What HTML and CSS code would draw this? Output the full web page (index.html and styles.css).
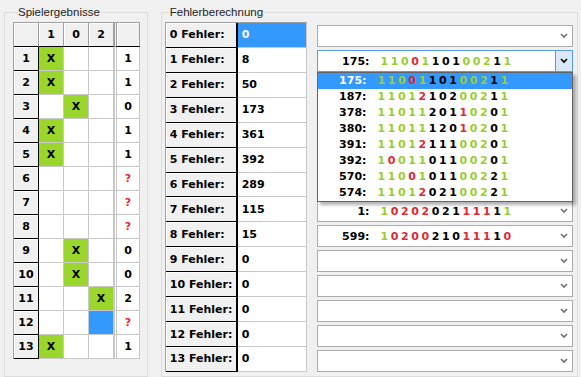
FILE: index.html
```html
<!DOCTYPE html>
<html lang="de">
<head>
    <meta charset="utf-8">
    <title>Fehlerberechnung</title>
    <link rel="stylesheet" href="styles.css">
</head>
<body>
    <div class="window">
        <fieldset class="group players">
            <legend>Spielergebnisse</legend>
            <table class="grid results" id="results">
                <thead>
                    <tr>
                        <th class="corner"></th>
                        <th>1</th>
                        <th>0</th>
                        <th>2</th>
                        <th class="sum-head"></th>
                    </tr>
                </thead>
                <tbody>
                    <!-- rows are added by the script -->
                </tbody>
            </table>
        </fieldset>

        <fieldset class="group errors">
            <legend>Fehlerberechnung</legend>
            <div class="errors-body">
                <table class="grid counts" id="counts">
                    <tbody></tbody>
                </table>
                <div class="combos" id="combos"></div>
            </div>
        </fieldset>
    </div>

    <script>
        // Results of the 13 games (null = not played yet)
        var results = [1, 1, 0, 1, 1, null, null, null, 0, 0, 2, null, 1];
        var columns = [1, 0, 2];

        // Number of tips per error count
        var counts = [0, 8, 50, 173, 361, 392, 289, 115, 15, 0, 0, 0, 0, 0];

        // Tips shown in the combo boxes
        var shown = {
            1: ["175", "1100110100211"],
            7: ["1", "1020202111111"],
            8: ["599", "1020021011110"]
        };

        // Tips in the open list (1 Fehler)
        var openList = [
            ["175", "1100110100211"],
            ["187", "1101210200211"],
            ["378", "1101120110201"],
            ["380", "1101112010201"],
            ["391", "1101211100201"],
            ["392", "1001101100201"],
            ["570", "1100101100221"],
            ["574", "1101202100221"]
        ];

        var chevron = '<svg width="8" height="6" viewBox="0 0 8 6"><path d="M1 1 L4 4 L7 1" fill="none" stroke="currentColor" stroke-width="1.6"/></svg>';

        // Build the results table
        var resultBody = document.querySelector("#results tbody");
        for (var i = 0; i < results.length; i++) {
            var row = resultBody.insertRow();
            var html = '<th class="row-head">' + (i + 1) + '</th>';
            for (var c = 0; c < columns.length; c++) {
                if (results[i] === columns[c]) {
                    html += '<td class="hit">X</td>';
                } else if (i === 11 && c === 2) {
                    html += '<td class="current"></td>';
                } else {
                    html += '<td></td>';
                }
            }
            if (results[i] === null) {
                html += '<td class="sum open">?</td>';
            } else {
                html += '<td class="sum">' + results[i] + '</td>';
            }
            row.innerHTML = html;
        }

        // Build the error count table
        var countBody = document.querySelector("#counts tbody");
        for (var k = 0; k < counts.length; k++) {
            var crow = countBody.insertRow();
            crow.innerHTML = '<th class="row-head">' + k + ' Fehler:</th>' +
                '<td class="' + (k === 0 ? 'current' : '') + '">' + counts[k] + '</td>';
        }

        // Color every digit of a tip against the results
        function tipHtml(tip) {
            var out = '<span class="label">' + tip[0] + ':</span><span class="digits">';
            for (var d = 0; d < tip[1].length; d++) {
                var digit = Number(tip[1][d]);
                var cls = "unknown";
                if (results[d] !== null) {
                    cls = results[d] === digit ? "match" : "miss";
                }
                out += '<span class="' + cls + '">' + digit + '</span>';
            }
            return out + '</span>';
        }

        // Build the combo boxes
        var combos = document.getElementById("combos");
        for (var n = 0; n < counts.length; n++) {
            var box = document.createElement("div");
            box.className = "combo" + (n === 1 ? " open" : "");
            var value = shown[n] ? tipHtml(shown[n]) : "";
            box.innerHTML = '<div class="value">' + value + '</div><div class="arrow">' + chevron + '</div>';

            if (n === 1) {
                var list = document.createElement("div");
                list.className = "dropdown-list";
                for (var m = 0; m < openList.length; m++) {
                    var item = document.createElement("div");
                    item.className = "item" + (m === 0 ? " selected" : "");
                    item.innerHTML = tipHtml(openList[m]);
                    list.appendChild(item);
                }
                box.appendChild(list);
            }
            combos.appendChild(box);
        }
    </script>
</body>
</html>
```

FILE: styles.css
```css
/* Fehlerberechnung window */

body {
    margin: 0;
    background-color: #f0f0f0;
    font-family: "DejaVu Sans", sans-serif;
    font-size: 11px;
    color: #000;
}

.window {
    display: flex;
    height: 377px;
    box-sizing: border-box;
    padding: 6px 3px 0 4px;
    gap: 13px;
}

.group {
    margin: 0;
    border: 1px solid #dcdcdc;
    height: 371px;
    box-sizing: border-box;
}

.group legend {
    font-family: "Liberation Sans", Arial, sans-serif;
    font-size: 11.5px;
    line-height: 13px;
    padding: 0 1px;
    margin-left: 4px;
    color: #222;
}

.players {
    width: 144px;
    padding: 3px 0 0 8px;
}

.errors {
    width: 418px;
    padding: 3px 4px 0 3px;
}

.errors-body {
    display: flex;
    gap: 10px;
}

/* Grids */

.grid {
    border-collapse: separate;
    border-spacing: 0;
    border-top: 1px solid #a0a0a0;
    border-left: 1px solid #a0a0a0;
    font-weight: bold;
}

.grid th,
.grid td {
    height: 24px;
    padding: 0;
    box-sizing: border-box;
    border-right: 1px solid #c8c8c8;
    border-bottom: 1px solid #c8c8c8;
    background-color: #fff;
}

.grid th {
    background-color: #f0f0f0;
    border-right-color: #a0a0a0;
    border-bottom: 1px solid #000;
    box-shadow: inset 1px 1px 0 #fff;
}

.grid th.row-head {
    border-right: 1px solid #000;
}

.results th,
.results td {
    width: 25px;
    text-align: center;
}

.results .sum-head,
.results td.sum {
    width: 26px;
    border-left: 3px double #a0a0a0;
}

.results td.sum {
    border-left-color: #c8c8c8;
}

.results td.hit {
    background-color: #9bd62c;
}

.results td.current,
.counts td.current {
    background-color: #3399ff;
    color: #fff;
}

.results td.open {
    color: #dd2a36;
}

.counts th {
    width: 72px;
    text-align: left;
    padding-left: 4px;
}

.counts th.row-head {
    border-right: 2px solid #000;
}

.counts td {
    width: 70px;
    padding-left: 4px;
}

/* Combo boxes */

.combos {
    display: flex;
    flex-direction: column;
    gap: 3px;
    padding-top: 3px;
    width: 256px;
}

.combo {
    display: flex;
    align-items: center;
    height: 22px;
    box-sizing: border-box;
    border: 1px solid #acacac;
    background-color: #fff;
    font-weight: bold;
}

.combo .value {
    flex: 1;
    padding-left: 3px;
    white-space: nowrap;
}

.combo .arrow {
    width: 16px;
    height: 100%;
    display: flex;
    align-items: center;
    justify-content: center;
    color: #707070;
}

.combo.open {
    position: relative;
    border-color: #569de5;
}

.combo.open .arrow {
    border-left: 1px solid #569de5;
    background-color: #dae8f7;
    color: #000;
}

.label {
    display: inline-block;
    width: 48px;
    text-align: right;
}

.digits {
    margin-left: 11px;
}

.digits span {
    margin-right: 2.6px;
}

.match {
    color: #9acd32;
}

.miss {
    color: #dd2a36;
}

.unknown {
    color: #000;
}

.dropdown-list {
    position: absolute;
    top: 21px;
    left: -1px;
    right: -1px;
    border: 1px solid #646464;
    background-color: #fff;
    box-shadow: 3px 3px 3px rgba(0, 0, 0, 0.3);
    z-index: 1;
}

.dropdown-list .item {
    height: 16px;
    line-height: 16px;
    padding-left: 0;
    white-space: nowrap;
}

.dropdown-list .item.selected {
    background-color: #3399ff;
}

.dropdown-list .item.selected .label {
    color: #fff;
}
```
